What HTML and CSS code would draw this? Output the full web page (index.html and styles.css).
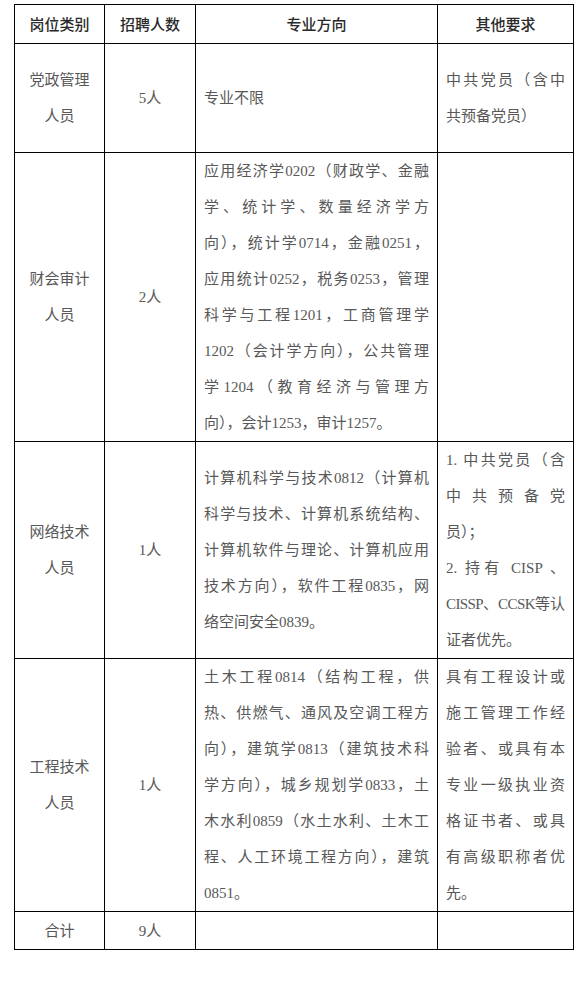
FILE: index.html
```
<!DOCTYPE html>
<html lang="zh-CN">
<head>
<meta charset="utf-8">
<title>招聘岗位</title>
<link rel="stylesheet" href="styles.css">
</head>
<body>
<table class="jobs">
  <colgroup>
    <col class="c-cat">
    <col class="c-num">
    <col class="c-major">
    <col class="c-req">
  </colgroup>
  <thead>
    <tr>
      <th>岗位类别</th>
      <th>招聘人数</th>
      <th>专业方向</th>
      <th>其他要求</th>
    </tr>
  </thead>
  <tbody>
    <tr class="row-short">
      <td class="cat">党政管理人员</td>
      <td class="num">5人</td>
      <td class="text">专业不限</td>
      <td class="text">
        <span class="jl">中共党员（含中</span>
        <span class="ll">共预备党员）</span>
      </td>
    </tr>
    <tr>
      <td class="cat">财会审计人员</td>
      <td class="num">2人</td>
      <td class="text">
        <span class="jl">应用经济学0202（财政学、金融</span>
        <span class="jl">学、统计学、数量经济学方</span>
        <span class="jl">向），统计学0714，金融0251，</span>
        <span class="jl">应用统计0252，税务0253，管理</span>
        <span class="jl">科学与工程1201，工商管理学</span>
        <span class="jl">1202（会计学方向），公共管理</span>
        <span class="jl">学1204（教育经济与管理方</span>
        <span class="ll">向），会计1253，审计1257。</span>
      </td>
      <td class="text"></td>
    </tr>
    <tr>
      <td class="cat">网络技术人员</td>
      <td class="num">1人</td>
      <td class="text">
        <span class="jl">计算机科学与技术0812（计算机</span>
        <span class="jl">科学与技术、计算机系统结构、</span>
        <span class="jl">计算机软件与理论、计算机应用</span>
        <span class="jl">技术方向），软件工程0835，网</span>
        <span class="ll">络空间安全0839。</span>
      </td>
      <td class="text">
        <span class="jl">1. 中共党员（含</span>
        <span class="jl">中共预备党</span>
        <span class="ll">员）；</span>
        <span class="jl">2. 持有 CISP 、</span>
        <span class="jl"><span class="latin">CISSP</span>、<span class="latin">CCSK</span>等认</span>
        <span class="ll">证者优先。</span>
      </td>
    </tr>
    <tr>
      <td class="cat">工程技术人员</td>
      <td class="num">1人</td>
      <td class="text">
        <span class="jl">土木工程0814（结构工程，供</span>
        <span class="jl">热、供燃气、通风及空调工程方</span>
        <span class="jl">向），建筑学0813（建筑技术科</span>
        <span class="jl">学方向），城乡规划学0833，土</span>
        <span class="jl">木水利0859（水土水利、土木工</span>
        <span class="jl">程、人工环境工程方向），建筑</span>
        <span class="ll">0851。</span>
      </td>
      <td class="text">
        <span class="jl">具有工程设计或</span>
        <span class="jl">施工管理工作经</span>
        <span class="jl">验者、或具有本</span>
        <span class="jl">专业一级执业资</span>
        <span class="jl">格证书者、或具</span>
        <span class="jl">有高级职称者优</span>
        <span class="ll">先。</span>
      </td>
    </tr>
    <tr class="row-total">
      <td class="cat">合计</td>
      <td class="num">9人</td>
      <td class="text"></td>
      <td class="text"></td>
    </tr>
  </tbody>
</table>
</body>
</html>
```
FILE: styles.css
```
html, body {
  margin: 0;
  padding: 0;
  background: #ffffff;
}

body {
  font-family: "Liberation Serif", "Noto Sans CJK SC", serif;
  font-size: 15px;
  color: #585858;
}

.jobs {
  margin: 4px 0 0 14px;
  border-collapse: collapse;
  table-layout: fixed;
  width: 559px;
}

.c-cat { width: 90px; }
.c-num { width: 91px; }
.c-major { width: 242px; }
.c-req { width: 136px; }

.jobs th,
.jobs td {
  border: 1px solid #000000;
  padding: 0 8px;
  line-height: 36px;
  vertical-align: middle;
}

.jobs th {
  height: 37px;
  font-weight: 500;
  color: #2a2a2a;
  text-align: center;
  padding: 1px 8px 0;
}

.row-short td {
  height: 108px;
}

.row-total td {
  height: 37px;
}

.cat,
.num {
  text-align: center;
}

.text {
  text-align: left;
  padding: 0 7px 0 8px;
}

.jl,
.ll {
  display: block;
  white-space: normal;
}

.jl {
  text-align: justify;
  text-align-last: justify;
}

.ll {
  text-align: left;
}

.latin {
  letter-spacing: -0.6px;
}
```
